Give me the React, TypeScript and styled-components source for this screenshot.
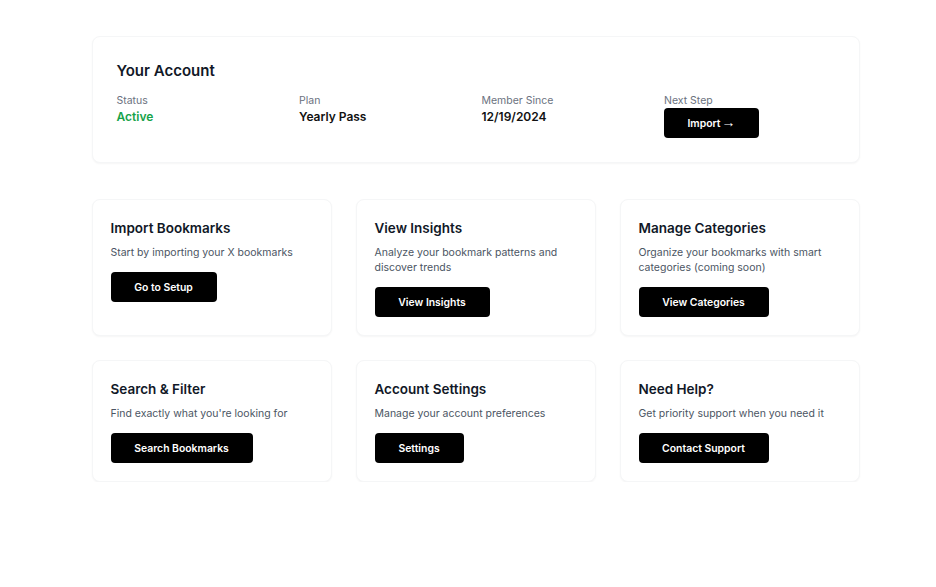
import React from "react";
import styled, { createGlobalStyle } from "styled-components";

const Global = createGlobalStyle`
  html, body { margin: 0; padding: 0; background: #fff; }
  body { font-family: Inter, "Liberation Sans", sans-serif; }
  * { box-sizing: border-box; }
`;

const Page = styled.main`
  width: 768px;
  margin-left: 91.5px;
  padding-top: 35.5px;
  display: flex;
  flex-direction: column;
  gap: 36px;
`;

const Card = styled.section`
  background: #fff;
  border: 1px solid #f5f6f7;
  border-radius: 8px;
  box-shadow: 0 1px 2px rgba(0, 0, 0, 0.04);
`;

const AccountCard = styled(Card)`
  padding: 24px;
  height: 127.5px;
`;

const AccountTitle = styled.h2`
  margin: 0 0 13.5px;
  font-size: 15px;
  line-height: 20px;
  font-weight: 600;
  color: #111827;
`;

const Stats = styled.div`
  display: grid;
  grid-template-columns: repeat(4, 1fr);
  gap: 12px;
`;

const Stat = styled.div`
  display: flex;
  flex-direction: column;
  align-items: flex-start;
`;

const StatLabel = styled.span`
  font-size: 10.5px;
  line-height: 14px;
  color: #6b7280;
`;

const StatValue = styled.span<{ $green?: boolean }>`
  font-size: 12px;
  line-height: 18px;
  font-weight: 600;
  color: ${(p) => (p.$green ? "#16a34a" : "#111111")};
`;

const Button = styled.button<{ $w: number }>`
  width: ${(p) => p.$w}px;
  height: 30px;
  border: 0;
  border-radius: 4px;
  background: #000;
  color: #fff;
  font-family: inherit;
  font-size: 10.4px;
  line-height: 15px;
  font-weight: 600;
  padding: 0;
`;

const Arrow = styled.span`
  font-family: "Liberation Sans", sans-serif;
  font-weight: 400;
  font-size: 14px;
  line-height: 0;
  margin-left: 1px;
`;

const Grid = styled.div`
  display: grid;
  grid-template-columns: repeat(3, 240px);
  grid-auto-rows: auto;
  gap: 24px;
`;

const ActionCard = styled(Card)`
  padding: 18px;
  display: flex;
  flex-direction: column;
  align-items: flex-start;
`;

const ActionTitle = styled.h3`
  margin: 0 0 7px;
  font-size: 13.5px;
  line-height: 20px;
  font-weight: 600;
  color: #111827;
`;

const ActionText = styled.p`
  margin: 0 0 12px;
  font-size: 10.5px;
  line-height: 15px;
  color: #4b5563;
`;

const ACTIONS: { title: string; text: React.ReactNode; button: string; w: number }[] = [
  { title: "Import Bookmarks", text: "Start by importing your X bookmarks", button: "Go to Setup", w: 106 },
  { title: "View Insights", text: <>Analyze your bookmark patterns and<br />discover trends</>, button: "View Insights", w: 115 },
  { title: "Manage Categories", text: <>Organize your bookmarks with smart<br />categories (coming soon)</>, button: "View Categories", w: 130 },
  { title: "Search & Filter", text: "Find exactly what you're looking for", button: "Search Bookmarks", w: 142 },
  { title: "Account Settings", text: "Manage your account preferences", button: "Settings", w: 89 },
  { title: "Need Help?", text: "Get priority support when you need it", button: "Contact Support", w: 130 },
];

export default function App() {
  return (
    <>
      <Global />
      <Page>
        <AccountCard>
          <AccountTitle>Your Account</AccountTitle>
          <Stats>
            <Stat>
              <StatLabel>Status</StatLabel>
              <StatValue $green>Active</StatValue>
            </Stat>
            <Stat>
              <StatLabel>Plan</StatLabel>
              <StatValue>Yearly Pass</StatValue>
            </Stat>
            <Stat>
              <StatLabel>Member Since</StatLabel>
              <StatValue>12/19/2024</StatValue>
            </Stat>
            <Stat>
              <StatLabel>Next Step</StatLabel>
              <Button $w={95}>Import<Arrow>→</Arrow></Button>
            </Stat>
          </Stats>
        </AccountCard>
        <Grid>
          {ACTIONS.map((a) => (
            <ActionCard key={a.title}>
              <ActionTitle>{a.title}</ActionTitle>
              <ActionText>{a.text}</ActionText>
              <Button $w={a.w}>{a.button}</Button>
            </ActionCard>
          ))}
        </Grid>
      </Page>
    </>
  );
}
